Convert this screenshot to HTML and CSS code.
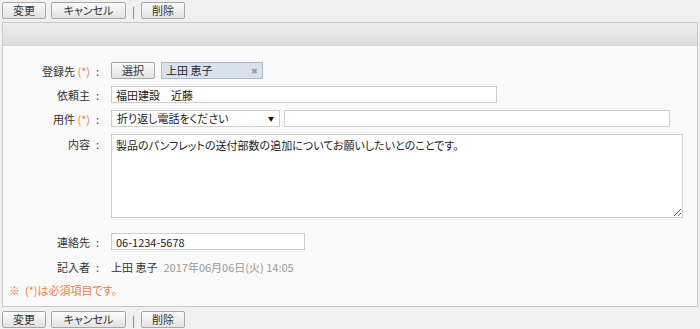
FILE: index.html
```html
<!DOCTYPE html>
<html lang="ja">
<head>
    <meta charset="UTF-8">
    <title>依頼編集</title>
    <link rel="stylesheet" href="styles.css">
</head>
<body>

    <div class="toolbar">
        <button class="btn btn-short">変更</button>
        <button class="btn btn-long">キャンセル</button>
        <span class="sep">|</span>
        <button class="btn btn-short">削除</button>
    </div>

    <div class="panel">
        <div class="panel-head"></div>
        <div class="panel-body">
            <div class="form">
                <div class="label">登録先 <span class="req">(*)</span><span class="colon">:</span></div>
                <div class="field">
                    <button class="btn btn-select">選択</button>
                    <span class="chip">上田 恵子<span class="chip-x">&#x2716;</span></span>
                </div>

                <div class="label">依頼主<span class="colon">:</span></div>
                <div class="field">
                    <input type="text" class="input input-client" value="福田建設　近藤">
                </div>

                <div class="label">用件 <span class="req">(*)</span><span class="colon">:</span></div>
                <div class="field">
                    <div class="select">折り返し電話をください<span class="caret">&#x25BC;</span></div>
                    <input type="text" class="input input-subject">
                </div>

                <div class="label label-top">内容<span class="colon">:</span></div>
                <div class="field field-area">
                    <textarea class="textarea">製品のパンフレットの送付部数の追加についてお願いしたいとのことです。</textarea>
                </div>

                <div class="label row-gap">連絡先<span class="colon">:</span></div>
                <div class="field row-gap">
                    <input type="text" class="input input-tel" value="06-1234-5678">
                </div>

                <div class="label row-small">記入者<span class="colon">:</span></div>
                <div class="field row-small">
                    <span class="writer">上田 恵子</span>
                    <span class="date">2017年06月06日(火) 14:05</span>
                </div>
            </div>
            <div class="note">※&nbsp; (*)は必須項目です。</div>
        </div>
    </div>

    <div class="toolbar toolbar-bottom">
        <button class="btn btn-short">変更</button>
        <button class="btn btn-long">キャンセル</button>
        <span class="sep">|</span>
        <button class="btn btn-short">削除</button>
    </div>

</body>
</html>
```

FILE: styles.css
```css
body {
    margin: 0;
    padding: 0 2px;
    background: #f0f0f0;
    font-family: "Noto Sans CJK JP", "Noto Sans", sans-serif;
    font-size: 11px;
    font-feature-settings: "palt";
    color: #333;
}
.toolbar {
    display: flex;
    align-items: center;
    height: 19px;
    padding-top: 1px;
}
.toolbar-bottom {
    padding-top: 3px;
}
.btn {
    height: 17px;
    padding: 0;
    margin: 0;
    border: 1px solid #a8a8a8;
    border-radius: 2px;
    background: linear-gradient(#fbfbfb, #e2e2e2);
    font-family: inherit;
    font-size: 11px;
    font-feature-settings: "palt";
    line-height: 15px;
    color: #333;
}
.btn-short {
    width: 44px;
}
.btn-long {
    width: 75px;
    margin-left: 5px;
}
.sep {
    margin: 0 6px 0 6px;
    color: #666;
    font-size: 11px;
}
.panel {
    margin-top: 2px;
    border: 1px solid #c8c8c8;
    background: #fafafa;
}
.panel-head {
    height: 22px;
    background: linear-gradient(#ececec, #dcdcdc);
    border-bottom: 1px solid #d4d4d4;
}
.panel-body {
    padding: 16px 0 8px 0;
}
.form {
    display: grid;
    grid-template-columns: 101px 1fr;
    column-gap: 7px;
    row-gap: 7px;
    align-items: center;
}
.label {
    text-align: right;
    white-space: nowrap;
}
.label-top {
    align-self: start;
    padding-top: 2px;
}
.req {
    color: #f07a45;
}
.colon {
    display: inline-block;
    width: 8px;
    margin-left: 6px;
    text-align: left;
}
.field {
    display: flex;
    align-items: center;
    height: 17px;
}
.field-area {
    height: auto;
}
.row-gap {
    margin-top: 8px;
}
.row-small {
    margin-top: 1px;
}
.btn-select {
    width: 44px;
}
.chip {
    position: relative;
    display: inline-block;
    width: 96px;
    height: 15px;
    margin-left: 6px;
    padding-left: 4px;
    line-height: 15px;
    border: 1px solid #a9bdd0;
    background: #d8e2ec;
    color: #222;
}
.chip-x {
    position: absolute;
    right: 4px;
    top: 0;
    font-size: 8px;
    color: #999;
}
.input {
    box-sizing: border-box;
    height: 17px;
    padding: 0 4px;
    border: 1px solid #d0d0d0;
    background: #fff;
    font-family: inherit;
    font-size: 11px;
    font-feature-settings: "palt";
    color: #222;
}
.input-client {
    width: 386px;
}
.input-subject {
    width: 386px;
    margin-left: 4px;
}
.input-tel {
    width: 194px;
}
.select {
    box-sizing: border-box;
    position: relative;
    width: 169px;
    height: 17px;
    padding-left: 5px;
    line-height: 15px;
    border: 1px solid #d0d0d0;
    background: #fff;
    color: #222;
}
.caret {
    position: absolute;
    right: 5px;
    top: 0;
    font-size: 6px;
    color: #111;
}
.textarea {
    box-sizing: border-box;
    width: 572px;
    height: 84px;
    margin: 0;
    padding: 2px 4px;
    border: 1px solid #d0d0d0;
    background: #fff;
    font-family: inherit;
    font-size: 11px;
    font-feature-settings: "palt";
    color: #222;
    resize: both;
}
.writer {
    color: #333;
}
.date {
    margin-left: 6px;
    color: #999;
}
.note {
    margin: 7px 0 0 6px;
    color: #f07a45;
}
```
